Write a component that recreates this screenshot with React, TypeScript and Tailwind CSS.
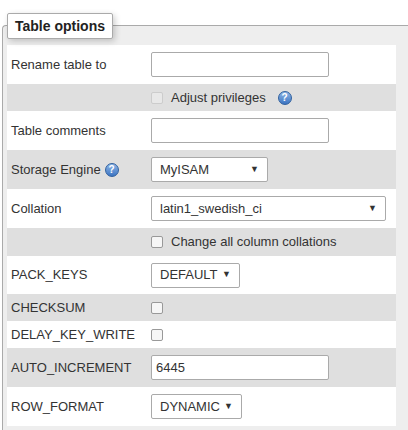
import React from 'react';

const Help = () => (
  <span className="inline-block align-middle ml-1 w-[14px] h-[14px] rounded-full bg-gradient-to-b from-[#8fb6e6] to-[#3b74c2] border border-[#2f5f9e] text-white text-[10px] leading-[12px] text-center font-bold">?</span>
);

const Arrow = () => <span className="text-[9px] text-[#333]">▼</span>;

const Select = ({ value, w }: { value: string; w: string }) => (
  <div className={`${w} h-[25px] border border-[#aaa] rounded-[2px] bg-white flex items-center justify-between pl-2 pr-2`}>
    <span>{value}</span>
    <Arrow />
  </div>
);

const Input = ({ value = '', w = 'w-[178px]' }: { value?: string; w?: string }) => (
  <div className={`${w} h-[25px] border border-[#aaa] rounded-[2px] bg-white flex items-center px-1`}>{value}</div>
);

const Box = () => <span className="inline-block w-[12px] h-[12px] border border-[#999] rounded-[2px] bg-[#f6f6f6] align-middle" />;

type Row = { label: React.ReactNode; control: React.ReactNode; h: string; gray: boolean };

export default function App() {
  const rows: Row[] = [
    { label: 'Rename table to', control: <Input />, h: 'h-[39px]', gray: false },
    { label: '', control: <span className="flex items-center gap-2 text-[#333]"><span className="inline-block w-[12px] h-[12px] border border-[#ccc] rounded-[2px] bg-[#e8e8e8]" />Adjust privileges<Help /></span>, h: 'h-[27px]', gray: true },
    { label: 'Table comments', control: <Input />, h: 'h-[39px]', gray: false },
    { label: <>Storage Engine<Help /></>, control: <Select value="MyISAM" w="w-[117px]" />, h: 'h-[39px]', gray: true },
    { label: 'Collation', control: <Select value="latin1_swedish_ci" w="w-[235px]" />, h: 'h-[39px]', gray: false },
    { label: '', control: <span className="flex items-center gap-2"><Box />Change all column collations</span>, h: 'h-[28px]', gray: true },
    { label: 'PACK_KEYS', control: <Select value="DEFAULT" w="w-[89px]" />, h: 'h-[38px]', gray: false },
    { label: 'CHECKSUM', control: <Box />, h: 'h-[27px]', gray: true },
    { label: 'DELAY_KEY_WRITE', control: <Box />, h: 'h-[27px]', gray: false },
    { label: 'AUTO_INCREMENT', control: <Input value="6445" />, h: 'h-[39px]', gray: true },
    { label: 'ROW_FORMAT', control: <Select value="DYNAMIC" w="w-[91px]" />, h: 'h-[39px]', gray: false },
  ];
  return (
    <div className="w-[408px] h-[430px] bg-white pt-[25px] pl-[2px] overflow-hidden text-[13px] text-[#333]" style={{ fontFamily: '"Liberation Sans", Arial, sans-serif' }}>
      <div className="relative h-[420px] bg-[#eeeeee] border-t border-l border-[#aaa] rounded-tl-[4px] pt-[19px] pl-[4px]">
        <div className="absolute left-[4px] -top-[13px] w-[106px] h-[26px] bg-white border border-[#aaa] rounded-[2px] shadow-[2px_2px_6px_rgba(0,0,0,0.2)] flex items-center justify-center font-bold text-[14px] text-[#222]">
          Table options
        </div>
        <div className="w-[389px]">
          {rows.map((r, i) => (
            <div key={i} className={`${r.h} ${r.gray ? 'bg-[#dfdfdf]' : 'bg-white'} flex items-center`}>
              <div className="w-[144px] pl-[4px] flex items-center">{r.label}</div>
              <div className="flex items-center">{r.control}</div>
            </div>
          ))}
        </div>
      </div>
    </div>
  );
}
